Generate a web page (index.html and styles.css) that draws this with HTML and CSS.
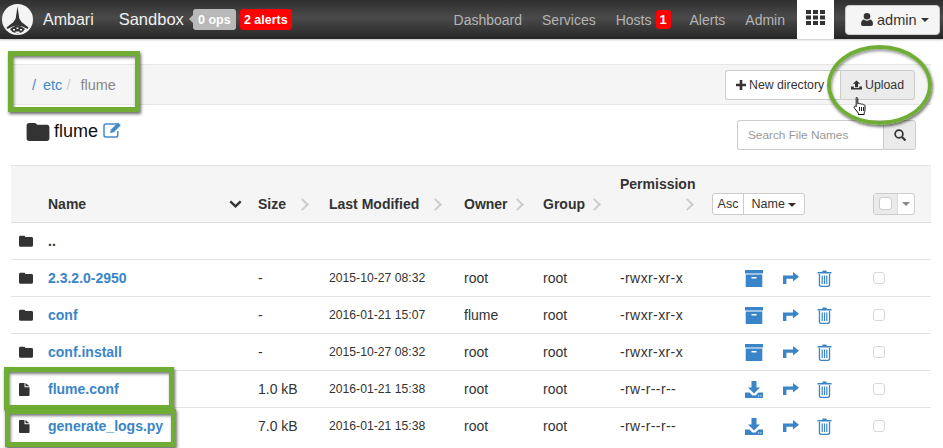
FILE: index.html
```html
<!DOCTYPE html>
<html lang="en">
<head>
<meta charset="UTF-8">
<title>Ambari Files View</title>
<link rel="stylesheet" href="styles.css">
</head>
<body>
<svg class="sprites" width="0" height="0">
  <symbol id="folder" viewBox="0 0 24 20"><path d="M2.5 1h6c1.3 0 2 .8 2.3 2h10.700c1.400 0 2.500 1 2.500 2.400v12c0 1.400-1.100 2.600-2.500 2.600h-19C1.100 20 0 18.800 0 17.400V3.500C0 2.100 1.100 1 2.500 1z"/></symbol>
  <symbol id="file" viewBox="0 0 12 14"><path d="M0 1c0-.6.4-1 1-1h5v4.500h5.500V13c0 .6-.4 1-1 1H1c-.6 0-1-.4-1-1z"/><path d="M7 0l4.500 3.500H7z"/></symbol>
  <symbol id="archive" viewBox="0 0 18 17"><path d="M0 0h18v3.500H0z"/><path d="M.7 4.500h16.600V17H.7zM6.500 7v1.500h5V7z" fill-rule="evenodd"/></symbol>
  <symbol id="download" viewBox="0 0 18 17"><path d="M6.500 0h5v6.500h3.500L9 12.500 3 6.500h3.500z"/><path d="M0 11.500h4.500L7.500 14.500h3l3-3H18V17H0zM13 14.500v1h1.200v-1zM15.300 14.500v1h1.200v-1z" fill-rule="evenodd"/></symbol>
  <symbol id="share" viewBox="0 0 16 12"><path d="M10 0l6 4.800-6 4.800V6.800H3.400V12H0V3.400h10z"/></symbol>
  <symbol id="trash" viewBox="0 0 15 17"><path d="M5 2l.8-1.500h3.400L10 2h4.500v1.400H.5V2zM1.800 4h1.300v10.500c0 .8.500 1.200 1 1.200h6.800c.5 0 1-.4 1-1.200V4h1.300v10.700c0 1.300-1 2.300-2.300 2.300H4.100c-1.300 0-2.300-1-2.300-2.300zM4.600 5.500h1.200V14H4.600zM6.900 5.500h1.200V14H6.900zM9.200 5.500h1.200V14H9.200z"/></symbol>
</svg>

<nav class="navbar">
  <svg class="logo" viewBox="0 0 31 31">
    <circle cx="15.500" cy="15.500" r="15.500" fill="#f4f4f4"/>
    <path d="M15.500 2.500l1 6.500.8 5.500 2.200 3.500 7 5.500-1 1.500-5-2.500-5-1-5 1-5 2.500-1-1.500 7-5.500 2.200-3.500.8-5.500z" fill="#333"/>
    <path d="M11 23l4.500-2 4.500 2 3 2-2.500 3-5 1.500-5-1.500L8 25z" fill="#333"/>
    <path d="M11 25h2v1.500h-2zM14.500 23.500h2V25h-2zM18 25h2v1.500h-2zM13.500 27.500h4V29h-4z" fill="#f4f4f4"/>
  </svg>
  <span class="brand">Ambari</span>
  <span class="cluster">Sandbox</span>
  <span class="badge badge-ops">0 ops</span>
  <span class="badge badge-alerts">2 alerts</span>
  <div class="nav-right">
    <a class="nav-link">Dashboard</a>
    <a class="nav-link">Services</a>
    <a class="nav-link nav-hosts">Hosts <span class="count">1</span></a>
    <a class="nav-link">Alerts</a>
    <a class="nav-link">Admin</a>
    <a class="nav-apps">
      <svg width="19" height="15" viewBox="0 0 19 15" fill="#333"><path d="M0 0h5v4H0zM7 0h5v4H7zM14 0h5v4h-5zM0 5.500h5v4H0zM7 5.500h5v4H7zM14 5.500h5v4h-5zM0 11h5v4H0zM7 11h5v4H7zM14 11h5v4h-5z"/></svg>
    </a>
    <button class="user-btn">
      <svg width="12" height="13" viewBox="0 0 12 13" fill="#333"><circle cx="6" cy="3.300" r="3.300"/><path d="M0 11c0-3 1.500-4.500 3-4.500 1 .8 2 1.200 3 1.200s2-.4 3-1.200c1.500 0 3 1.500 3 4.500 0 1.300-.8 2-2 2H2c-1.200 0-2-.7-2-2z"/></svg>
      admin <span class="caret"></span>
    </button>
  </div>
</nav>

<main class="content">
  <div class="toolbar">
    <div class="crumbs">
      <a>/</a><a class="crumb-etc">etc</a><span class="crumb-sep">/</span><span class="crumb-cur">flume</span>
    </div>
    <div class="btn-group">
      <button class="btn">
        <svg width="10" height="10" viewBox="0 0 10 10" fill="#333"><path d="M3.700 0h2.600v3.700H10v2.600H6.300V10H3.700V6.300H0V3.700h3.700z"/></svg>
        New directory
      </button>
      <button class="btn btn-active">
        <svg width="12" height="10" viewBox="0 0 18 15" fill="#333"><path d="M9 0l6 5.500h-3.500V11h-5V5.500H3z"/><path d="M0 10h4.500v2.500h9V10H18v5H0z"/></svg>
        Upload
      </button>
    </div>
  </div>

  <div class="title-row">
    <h1 class="title">
      <svg class="title-folder" width="24" height="19"><use href="#folder"/></svg>
      flume
      <svg class="title-edit" width="19" height="17" viewBox="0 0 19 17"><path d="M14 3H3C1.800 3 1 3.800 1 5v9.500C1 15.500 1.800 16 3 16h10c1 0 1.800-.7 1.800-1.800V10" fill="none" stroke="#428bca" stroke-width="1.500"/><path d="M8 8.500L15 1.500l2.800 2.800-7 7L7 12z" fill="#428bca"/></svg>
    </h1>
    <div class="search">
      <input class="search-input" type="text" placeholder="Search File Names">
      <span class="search-btn">
        <svg width="12" height="12" viewBox="0 0 12 12" fill="none" stroke="#333" stroke-width="1.700"><circle cx="5" cy="5" r="3.900"/><path d="M8 8l3.500 3.500" stroke-width="2.200"/></svg>
      </span>
    </div>
  </div>

  <table class="files">
    <colgroup>
      <col class="c-icon"><col class="c-name"><col class="c-size"><col class="c-date"><col class="c-owner"><col class="c-group"><col class="c-perm"><col class="c-actions"><col class="c-check">
    </colgroup>
    <thead>
      <tr>
        <th></th>
        <th><div class="th-sort"><span>Name</span><svg class="chev-down" width="13" height="8" viewBox="0 0 13 8"><path d="M1.300 1.300l5.200 5 5.200-5" fill="none" stroke="#333" stroke-width="2.400"/></svg></div></th>
        <th>Size<span class="chev chev-wide"></span></th>
        <th>Last Modified<span class="chev chev-wide"></span></th>
        <th>Owner<span class="chev"></span></th>
        <th>Group<span class="chev"></span></th>
        <th class="th-perm"><div>Permission</div><div class="perm-chev"><span class="chev"></span></div></th>
        <th>
          <div class="sort-group"><span class="sort-btn">Asc</span><span class="sort-btn sort-name">Name <span class="caret"></span></span></div>
        </th>
        <th>
          <div class="check-group"><span class="check-main"><span class="fake-check"></span></span><span class="check-drop"><span class="caret caret-gray"></span></span></div>
        </th>
      </tr>
    </thead>
    <tbody id="rows"></tbody>
  </table>
</main>

<svg class="cursor" width="17" height="20" viewBox="0 0 17 20">
  <path d="M4.500 1.500c.8 0 1.300.5 1.300 1.300v5l.7-.5c.6 0 1 .2 1.300.6.600-.3 1.300-.2 1.700.3.700-.3 1.500-.1 1.800.5.900-.2 1.700.3 1.700 1.300v4c0 1.200-.3 2-.8 2.800v1.700H6.300v-1.500L2.500 12.300c-.7-.9-.5-1.800.2-2.100.5-.2 1 0 1.500.4V2.800c0-.8-.4-1.300.3-1.300z" fill="#fff" stroke="#111" stroke-width="1"/>
  <path d="M7.500 11v4M9.500 11v4M11.500 11v4" stroke="#111" stroke-width=".9"/>
</svg>
<div class="mark mark-crumbs"></div>
<div class="mark mark-file1"></div>
<div class="mark mark-file2"></div>
<div class="mark-ring"></div>

<script>
// filas del listado
const files = [
  { type: 'up', name: '..' },
  { type: 'dir', name: '2.3.2.0-2950', size: '-', date: '2015-10-27 08:32', owner: 'root', group: 'root', perm: '-rwxr-xr-x' },
  { type: 'dir', name: 'conf', size: '-', date: '2016-01-21 15:07', owner: 'flume', group: 'root', perm: '-rwxr-xr-x' },
  { type: 'dir', name: 'conf.install', size: '-', date: '2015-10-27 08:32', owner: 'root', group: 'root', perm: '-rwxr-xr-x' },
  { type: 'file', name: 'flume.conf', size: '1.0 kB', date: '2016-01-21 15:38', owner: 'root', group: 'root', perm: '-rw-r--r--' },
  { type: 'file', name: 'generate_logs.py', size: '7.0 kB', date: '2016-01-21 15:38', owner: 'root', group: 'root', perm: '-rw-r--r--' }
];

function crearFila(f) {
  const tr = document.createElement('tr');
  const icon = f.type === 'file' ? 'file' : 'folder';
  const iconSize = f.type === 'file' ? 'width="11" height="13"' : 'width="14" height="12"';
  if (f.type === 'up') {
    tr.innerHTML = `<td class="td-icon"><svg ${iconSize} class="row-icon"><use href="#folder"/></svg></td>
      <td class="td-up" colspan="8">..</td>`;
    return tr;
  }
  const main = f.type === 'file' ? 'download' : 'archive';
  tr.innerHTML = `<td class="td-icon"><svg ${iconSize} class="row-icon"><use href="#${icon}"/></svg></td>
    <td><a class="file-link">${f.name}</a></td>
    <td>${f.size}</td>
    <td class="td-date">${f.date}</td>
    <td>${f.owner}</td>
    <td>${f.group}</td>
    <td class="td-perm">${f.perm}</td>
    <td><div class="actions">
      <svg width="18" height="17"><use href="#${main}"/></svg>
      <svg width="16" height="12"><use href="#share"/></svg>
      <svg width="15" height="17"><use href="#trash"/></svg>
    </div></td>
    <td><span class="row-check"></span></td>`;
  return tr;
}

const tbody = document.getElementById('rows');
files.forEach(f => tbody.appendChild(crearFila(f)));
</script>
</body>
</html>
```

FILE: styles.css
```css
body {
  font-family: "Liberation Sans", Arial, sans-serif;
  font-size: 14px;
  color: #333;
  margin: 0;
  background-color: #fff;
  overflow: hidden;
}

.sprites {
  display: block;
  height: 0;
}

/* barra superior */
.navbar {
  display: flex;
  align-items: center;
  height: 39px;
  padding-left: 2px;
  background: linear-gradient(#2f2f2f, #4a4a4a 45%, #262626);
  box-shadow: 0 1px 2px rgba(0,0,0,0.25);
  color: #fff;
}

.logo {
  width: 31px;
  height: 31px;
  margin-right: 10px;
}

.brand {
  font-size: 16px;
  color: #f0f0f0;
  margin-right: 25px;
}

.cluster {
  font-size: 16.5px;
  color: #f0f0f0;
  margin-right: 9px;
}

.badge {
  display: flex;
  align-items: center;
  justify-content: center;
  height: 21px;
  border-radius: 3px;
  font-size: 12.500px;
  font-weight: bold;
  color: #fff;
}

.badge-ops {
  position: relative;
  width: 43px;
  margin-right: 4px;
  background-color: #b9b9b9;
}

.badge-ops::before {
  content: "";
  position: absolute;
  left: -4px;
  top: 6px;
  border-top: 4px solid transparent;
  border-bottom: 4px solid transparent;
  border-right: 4px solid #b9b9b9;
}

.badge-alerts {
  width: 52px;
  background-color: #f00;
}

.nav-right {
  display: flex;
  align-items: center;
  height: 100%;
  margin-left: auto;
  padding-right: 3px;
}

.nav-link {
  font-size: 14px;
  color: #b4b4b4;
  margin-right: 20px;
}

.nav-hosts {
  display: flex;
  align-items: center;
  gap: 4px;
  margin-right: 19px;
}

.count {
  display: inline-block;
  width: 15px;
  height: 19px;
  line-height: 19px;
  text-align: center;
  border-radius: 3px;
  background-color: #f00;
  color: #fff;
  font-size: 13px;
  font-weight: bold;
}

.nav-apps {
  display: flex;
  align-items: flex-start;
  justify-content: center;
  box-sizing: border-box;
  width: 37px;
  height: 100%;
  margin-left: -8px;
  padding-top: 10px;
  background-color: #fff;
}

.user-btn {
  display: flex;
  align-items: center;
  gap: 4px;
  box-sizing: border-box;
  width: 95px;
  height: 30px;
  margin-left: 11px;
  padding: 0 0 0 15px;
  border: 1px solid #ccc;
  border-radius: 4px;
  background-color: #f5f5f5;
  font-family: inherit;
  font-size: 14.500px;
  color: #333;
}

.caret {
  display: inline-block;
  vertical-align: middle;
  border-top: 4px solid #333;
  border-left: 4px solid transparent;
  border-right: 4px solid transparent;
}

.caret-gray {
  border-top-color: #888;
}

/* contenido */
.content {
  padding: 25px 12px 0 11px;
}

.toolbar {
  display: flex;
  align-items: center;
  justify-content: space-between;
  box-sizing: border-box;
  height: 41px;
  margin-left: 1px;
  padding: 0 16px 0 20px;
  background-color: #f5f5f5;
  border-top: 1px solid #e6e6e6;
  border-bottom: 1px solid #e6e6e6;
}

.crumbs {
  display: flex;
  font-size: 14.500px;
}

.crumbs a {
  color: #428bca;
}

.crumb-etc {
  margin-left: 7px;
}

.crumb-sep {
  margin: 0 10px 0 4px;
  color: #ccc;
}

.crumb-cur {
  color: #888;
}

.btn-group {
  display: flex;
}

.btn {
  display: flex;
  align-items: center;
  gap: 3px;
  height: 30px;
  padding: 0 10px;
  border: 1px solid #ccc;
  background-color: #fff;
  font-family: inherit;
  font-size: 12.300px;
  color: #333;
  white-space: nowrap;
}

.btn:first-child {
  width: 115px;
  border-radius: 3px 0 0 3px;
  border-right: none;
}

.btn-active {
  width: 75px;
  background-color: #ebebeb;
  border-radius: 0 3px 3px 0;
}

.title-row {
  display: flex;
  align-items: flex-start;
  justify-content: space-between;
  height: 60px;
  padding: 15px 15px 0 15px;
  box-sizing: border-box;
}

.title {
  display: flex;
  align-items: center;
  margin: 0;
  font-size: 18px;
  font-weight: normal;
  line-height: 22px;
  color: #111;
}

.title-folder {
  margin-right: 4px;
  fill: #333;
}

.title-edit {
  margin-left: 5px;
  margin-bottom: 3px;
}

.search {
  display: flex;
  height: 30px;
}

.search-input {
  box-sizing: border-box;
  width: 146px;
  height: 30px;
  padding: 0 10px;
  border: 1px solid #ccc;
  border-right: none;
  border-radius: 3px 0 0 3px;
  font-family: inherit;
  font-size: 11.800px;
}

.search-input::placeholder {
  color: #999;
}

.search-btn {
  display: flex;
  align-items: center;
  justify-content: center;
  box-sizing: border-box;
  width: 33px;
  height: 30px;
  border: 1px solid #ccc;
  border-radius: 0 3px 3px 0;
  background-color: #ebebeb;
}

/* tabla de archivos */
.files {
  width: 920px;
  table-layout: fixed;
  border-collapse: collapse;
}

.c-icon { width: 37px; }
.c-name { width: 210px; }
.c-size { width: 71px; }
.c-date { width: 135px; }
.c-owner { width: 79px; }
.c-group { width: 77px; }
.c-perm { width: 92px; }
.c-actions { width: 161px; }
.c-check { width: 58px; }

.files thead tr {
  height: 57px;
  background-color: #f5f5f5;
  border-top: 1px solid #e3e3e3;
  border-bottom: 1px solid #ddd;
}

.files th {
  padding: 0 0 8px 0;
  vertical-align: bottom;
  text-align: left;
  font-size: 14px;
  line-height: 20px;
  white-space: nowrap;
}

.th-sort {
  display: flex;
  align-items: center;
  justify-content: space-between;
  padding-right: 16px;
}

.chev {
  display: inline-block;
  box-sizing: border-box;
  width: 9px;
  height: 9px;
  margin-left: 5px;
  margin-bottom: 1px;
  vertical-align: middle;
  border-top: 2px solid #ccc;
  border-right: 2px solid #ccc;
  transform: rotate(45deg);
}

.chev-wide {
  margin-left: 12px;
}

.perm-chev {
  text-align: right;
  padding-right: 20px;
}

.sort-group, .check-group {
  display: inline-flex;
  height: 22px;
  border: 1px solid #ccc;
  border-radius: 3px;
  box-sizing: border-box;
  background-color: #fff;
  font-weight: normal;
  font-size: 12.500px;
  line-height: 20px;
  margin-bottom: -1px;
  vertical-align: bottom;
}

.sort-btn {
  box-sizing: border-box;
  width: 30px;
  text-align: center;
}

.sort-name {
  width: 61px;
  border-left: 1px solid #ccc;
}

.check-group {
  width: 42px;
}

.check-main {
  display: flex;
  align-items: center;
  justify-content: center;
  width: 23px;
  background-color: #ebebeb;
  border-right: 1px solid #ddd;
}

.fake-check {
  width: 11px;
  height: 11px;
  margin-bottom: 2px;
  border: 1px solid #ccc;
  border-radius: 3px;
  background-color: #fff;
}

.check-drop {
  display: flex;
  align-items: center;
  justify-content: center;
  flex: 1;
}

.files tbody tr {
  height: 37px;
  border-bottom: 1px solid #e3e3e3;
}

.files tbody tr:last-child {
  border-bottom: none;
}

.files td {
  padding: 0;
  font-size: 14px;
  color: #333;
}

.td-icon {
  padding-left: 8px !important;
}

.row-icon {
  display: block;
  fill: #333;
}

.td-up {
  font-weight: bold;
}

.td-date {
  font-size: 12.200px !important;
}

.td-perm {
  letter-spacing: .4px;
}

.file-link {
  font-weight: bold;
  font-size: 14px;
  color: #3a85c8;
}

.actions {
  display: flex;
  align-items: center;
  padding-left: 33px;
  fill: #3a85c8;
}

.actions svg:nth-child(2) {
  margin-left: 20px;
  margin-right: 18px;
}

.row-check {
  display: block;
  width: 10px;
  height: 10px;
  border: 1.500px solid #d8d8d8;
  border-radius: 3px;
}

/* anotaciones sobre la captura */
.mark {
  position: absolute;
  box-sizing: border-box;
  border: 5px solid #70ad35;
  box-shadow: 1px 2px 3px rgba(0,0,0,0.6), inset 1px 2px 3px rgba(0,0,0,0.5);
}

.mark-crumbs {
  left: 8px;
  top: 51px;
  width: 132px;
  height: 61px;
}

.mark-file1 {
  left: 4px;
  top: 367px;
  width: 170px;
  height: 43px;
}

.mark-file2 {
  left: 5px;
  top: 409px;
  width: 171px;
  height: 38px;
}

.mark-ring {
  position: absolute;
  box-sizing: border-box;
  left: 827px;
  top: 45px;
  width: 105px;
  height: 80px;
  border: 4px solid #70ad35;
  border-radius: 50%;
  box-shadow: 1px 2px 3px rgba(0,0,0,0.55), inset 1px 2px 3px rgba(0,0,0,0.4);
}

.cursor {
  position: absolute;
  left: 852px;
  top: 96px;
}
```
